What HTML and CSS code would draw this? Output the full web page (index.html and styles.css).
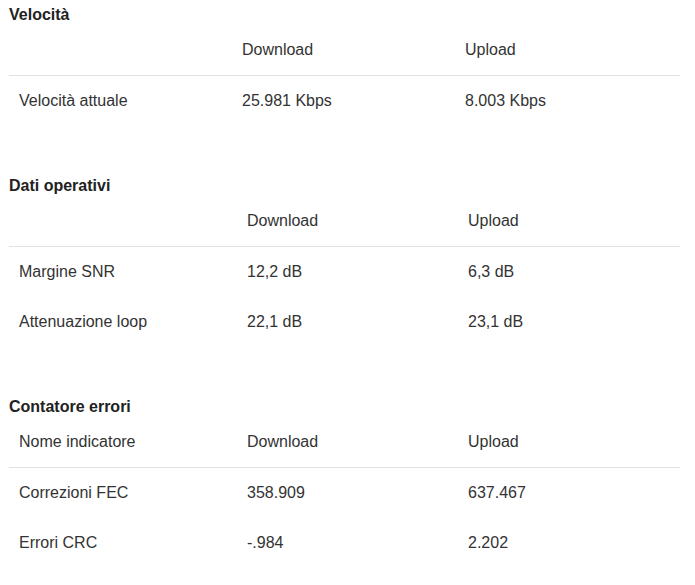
FILE: index.html
```html
<!DOCTYPE html>
<html lang="it">
<head>
<meta charset="utf-8">
<title>Stato linea</title>
<link rel="stylesheet" href="styles.css">
</head>
<body>
<section class="block">
  <h2 class="title">Velocità</h2>
  <div class="table t1">
    <div class="row head"><div class="cell"></div><div class="cell">Download</div><div class="cell">Upload</div></div>
    <div class="row"><div class="cell">Velocità attuale</div><div class="cell">25.981 Kbps</div><div class="cell">8.003 Kbps</div></div>
  </div>
</section>
<section class="block">
  <h2 class="title">Dati operativi</h2>
  <div class="table t2">
    <div class="row head"><div class="cell"></div><div class="cell">Download</div><div class="cell">Upload</div></div>
    <div class="row"><div class="cell">Margine SNR</div><div class="cell">12,2 dB</div><div class="cell">6,3 dB</div></div>
    <div class="row"><div class="cell">Attenuazione loop</div><div class="cell">22,1 dB</div><div class="cell">23,1 dB</div></div>
  </div>
</section>
<section class="block">
  <h2 class="title">Contatore errori</h2>
  <div class="table t2">
    <div class="row head"><div class="cell">Nome indicatore</div><div class="cell">Download</div><div class="cell">Upload</div></div>
    <div class="row"><div class="cell">Correzioni FEC</div><div class="cell">358.909</div><div class="cell">637.467</div></div>
    <div class="row"><div class="cell">Errori CRC</div><div class="cell">-.984</div><div class="cell">2.202</div></div>
  </div>
</section>
</body>
</html>
```
FILE: styles.css
```css
html, body {
  margin: 0;
  padding: 0;
  background: #ffffff;
}
body {
  padding: 5px 15px 0 9px;
  font-family: "Liberation Sans", Arial, sans-serif;
  color: #333333;
}
.block {
  margin-bottom: 50px;
}
.title {
  margin: 0;
  font-size: 16px;
  font-weight: bold;
  line-height: 20px;
  color: #222222;
}
.table {
  width: 671px;
}
.row {
  display: grid;
  height: 50px;
  align-items: center;
  font-size: 16px;
}
.t1 .row {
  grid-template-columns: 223px 223px 225px;
}
.t2 .row {
  grid-template-columns: 228px 221px 222px;
}
.row.head {
  height: 50px;
  border-bottom: 1px solid #e1e1e1;
}
.cell {
  padding-left: 10px;
  white-space: nowrap;
}
```
